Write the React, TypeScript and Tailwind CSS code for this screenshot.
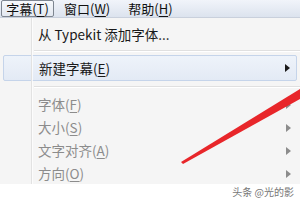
import React from "react";

const FONT = { fontFamily: '"Noto Sans CJK SC", "Noto Sans", sans-serif' };

function Key({ k }: { k: string }) {
  return (
    <>
      (<span className="underline underline-offset-2">{k}</span>)
    </>
  );
}

function Arrow({ dim }: { dim?: boolean }) {
  return (
    <span
      className={`w-0 h-0 border-y-[4px] border-y-transparent border-l-[5px] ${
        dim ? "border-l-[#8c8c8c]" : "border-l-[#1a1a1a]"
      }`}
    />
  );
}

const DISABLED = [
  { label: "字体", k: "F" },
  { label: "大小", k: "S" },
  { label: "文字对齐", k: "A" },
  { label: "方向", k: "O" },
];

export default function App() {
  return (
    <div className="relative w-[300px] h-[200px] overflow-hidden bg-white text-[13.5px]" style={FONT}>
      {/* 菜单栏 */}
      <div className="h-[18px] flex items-center bg-gradient-to-b from-[#f1f4fa] to-[#dce3ee] border-b border-[#c9d0dc] text-[#111] text-[13px]">
        <div className="h-[17px] ml-[1px] w-[53px] flex items-center justify-center border border-[#7e8691] rounded-[2px] bg-gradient-to-b from-[#f7f9fc] to-[#e3e8f0] leading-none">
          字幕<Key k="T" />
        </div>
        <div className="ml-[10px] leading-none">
          窗口<Key k="W" />
        </div>
        <div className="ml-[18px] leading-none">
          帮助<Key k="H" />
        </div>
      </div>

      {/* 下拉菜单 */}
      <div className="relative h-[166px] bg-[#f5f5f5] pt-[4px]">
        <div className="absolute left-[31px] top-0 bottom-0 w-[2px] border-l border-[#e2e2e2] bg-white/70" />
        <div className="h-[24px] flex items-center pl-[38px] text-[#1a1a1a]">从 Typekit 添加字体...</div>
        <div className="h-[9px] flex items-center pl-[34px]">
          <div className="h-[2px] w-full border-t border-[#e0e0e0] bg-white" />
        </div>
        <div className="mx-[3px] h-[26px] flex items-center justify-between pl-[35px] pr-[6px] border border-[#c5d4ea] rounded-[2px] bg-gradient-to-b from-[#eef3fa] to-[#e3eaf5] text-[#1a1a1a]">
          <span>
            新建字幕<Key k="E" />
          </span>
          <Arrow />
        </div>
        <div className="h-[12px] flex items-center pl-[34px]">
          <div className="h-[2px] w-full border-t border-[#e0e0e0] bg-white" />
        </div>
        {DISABLED.map((d) => (
          <div key={d.label} className="h-[23px] flex items-center justify-between pl-[38px] pr-[9px] text-[#8c8c8c]">
            <span>
              {d.label}
              <Key k={d.k} />
            </span>
            <Arrow dim />
          </div>
        ))}
      </div>

      {/* 水印 */}
      <div className="absolute right-[6px] bottom-[3px] text-[10px] text-[#777] leading-none">头条 @光的影</div>

      {/* 红色箭头线 */}
      <svg className="absolute inset-0 pointer-events-none" width="300" height="200" viewBox="0 0 300 200">
        <polygon points="300,89 300,99 183,164 181,162" fill="#e8262a" />
      </svg>
    </div>
  );
}
